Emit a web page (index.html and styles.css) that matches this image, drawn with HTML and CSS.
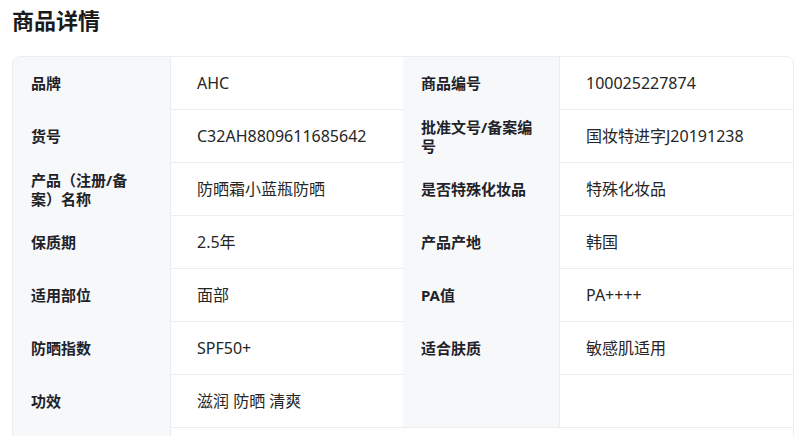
FILE: index.html
```html
<!DOCTYPE html>
<html lang="zh-CN">
<head>
<meta charset="utf-8">
<title>商品详情</title>
<link rel="stylesheet" href="styles.css">
</head>
<body>
<div class="page">
  <h1 class="title">商品详情</h1>
  <div class="specs">
    <div class="label">品牌</div><div class="value">AHC</div>
    <div class="label">商品编号</div><div class="value">100025227874</div>

    <div class="label">货号</div><div class="value">C32AH8809611685642</div>
    <div class="label">批准文号/备案编号</div><div class="value">国妆特进字J20191238</div>

    <div class="label">产品（注册/备案）名称</div><div class="value">防晒霜小蓝瓶防晒</div>
    <div class="label">是否特殊化妆品</div><div class="value">特殊化妆品</div>

    <div class="label">保质期</div><div class="value">2.5年</div>
    <div class="label">产品产地</div><div class="value">韩国</div>

    <div class="label">适用部位</div><div class="value">面部</div>
    <div class="label">PA值</div><div class="value">PA++++</div>

    <div class="label">防晒指数</div><div class="value">SPF50+</div>
    <div class="label">适合肤质</div><div class="value">敏感肌适用</div>

    <div class="label">功效</div><div class="value">滋润 防晒 清爽</div>
    <div class="label filler"></div><div class="value"></div>

    <div class="label"></div><div class="value wide"></div>
  </div>
</div>
</body>
</html>
```

FILE: styles.css
```css
* { box-sizing: border-box; }
html, body { margin: 0; padding: 0; background: #ffffff; }
body {
  font-family: "Noto Sans", "Noto Sans CJK SC", sans-serif;
  color: #1f2329;
  text-spacing-trim: space-all;
}
.page {
  padding: 5px 12px 0 12px;
}
.title {
  margin: 0 0 21px 0;
  font-size: 22px;
  line-height: 30px;
  font-weight: 700;
  color: #1a1a1a;
}
.specs {
  display: grid;
  grid-template-columns: 158px 232px 157px 233px;
  border: 1px solid #ebedf0;
  border-radius: 8px;
  overflow: hidden;
}
.label {
  display: flex;
  align-items: center;
  min-height: 53px;
  padding: 0 18px;
  background: #f7f8fa;
  border-right: 1px solid #ebedf0;
  font-size: 15px;
  line-height: 19px;
  font-weight: 700;
  color: #1f2329;
  text-spacing-trim: space-all;
}
.label.filler {
  border-bottom: 1px solid #ebedf0;
}
.value {
  display: flex;
  align-items: center;
  min-height: 53px;
  padding: 0 26px;
  border-bottom: 1px solid #ebedf0;
  font-size: 16px;
  line-height: 22px;
  color: #262626;
}
.value.wide {
  grid-column: span 3;
}
```
